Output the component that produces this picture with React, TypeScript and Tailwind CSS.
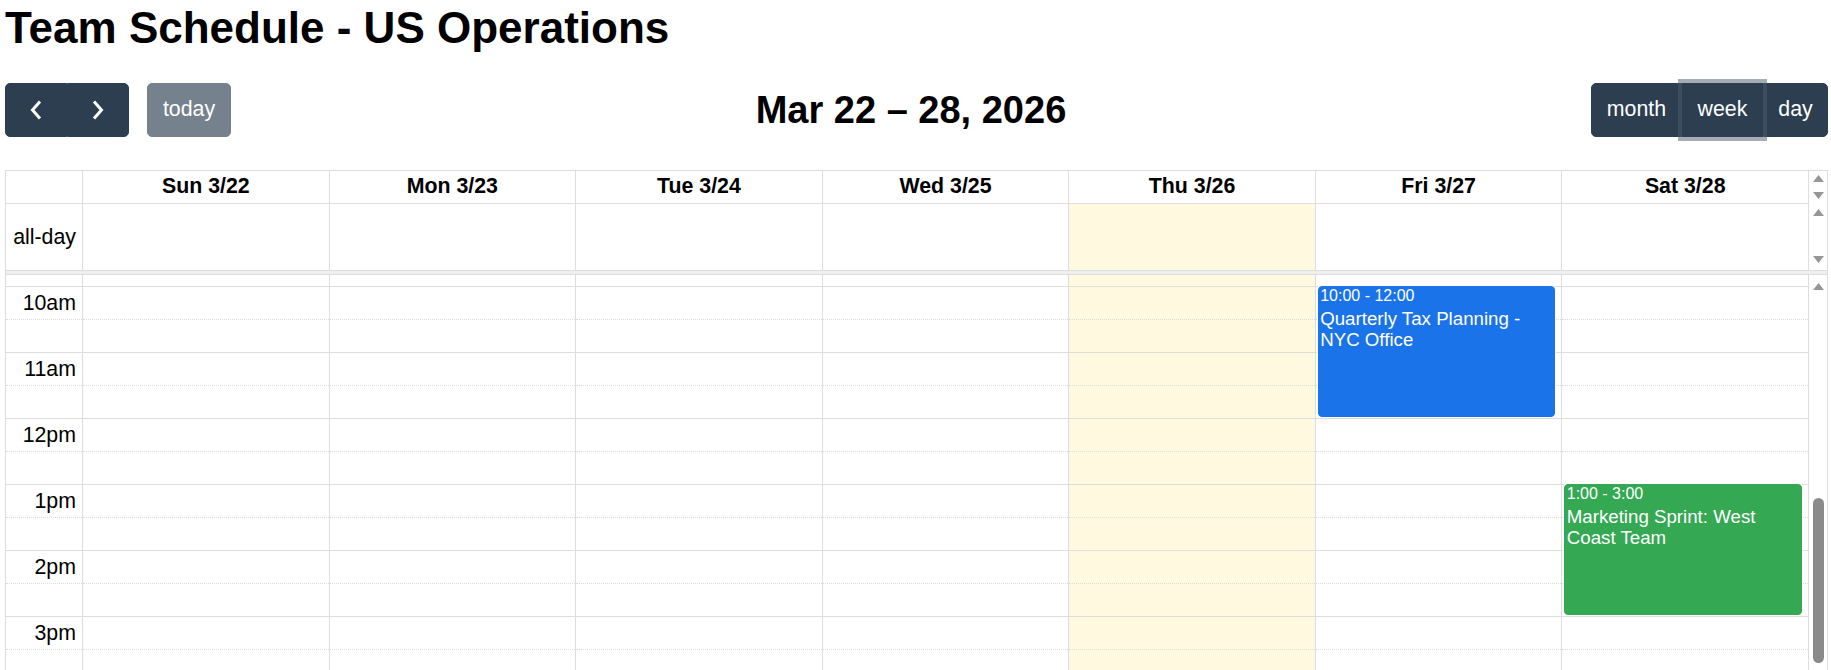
import React from 'react';

type Day = { label: string; today?: boolean };

type CalEvent = {
  day: number;
  start: number; // hour, 24h
  end: number;
  time: string;
  title: string;
  tone: 'blue' | 'green';
};

const days: Day[] = [
  { label: 'Sun 3/22' },
  { label: 'Mon 3/23' },
  { label: 'Tue 3/24' },
  { label: 'Wed 3/25' },
  { label: 'Thu 3/26', today: true },
  { label: 'Fri 3/27' },
  { label: 'Sat 3/28' },
];

// half-hour slots starting at 10am; null = minor (dotted) slot
const slots: (string | null)[] = ['10am', null, '11am', null, '12pm', null, '1pm', null, '2pm', null, '3pm', null];

const events: CalEvent[] = [
  { day: 5, start: 10, end: 12, time: '10:00 - 12:00', title: 'Quarterly Tax Planning - NYC Office', tone: 'blue' },
  { day: 6, start: 13, end: 15, time: '1:00 - 3:00', title: 'Marketing Sprint: West Coast Team', tone: 'green' },
];

const toneMap: Record<CalEvent['tone'], string> = {
  blue: 'bg-[#1a73e8] border-[#1a73e8]',
  green: 'bg-[#34a853] border-[#34a853]',
};

const SLOT = 33;
const OFFSET = 11; // part of the 9:30 slot still visible above 10am
const todayBg = 'bg-[rgba(255,220,40,0.15)]';

const Arrow = ({ down }: { down?: boolean }) => (
  <svg width="11" height="7" viewBox="0 0 11 7" className="block">
    <path d={down ? 'M0 0H11L5.5 7Z' : 'M5.5 0L11 7H0Z'} fill="#969696" />
  </svg>
);

const Chevron = ({ dir }: { dir: 'left' | 'right' }) => (
  <svg width="16" height="22" viewBox="0 0 16 22" className="block">
    <polyline
      points={dir === 'left' ? '12,2.5 4.5,11 12,19.5' : '4,2.5 11.5,11 4,19.5'}
      fill="none"
      stroke="#fff"
      strokeWidth="3"
    />
  </svg>
);

const btn = 'h-[54px] flex items-center justify-center text-[21.33px] text-white bg-[#2c3e50] border border-[#2c3e50]';

export default function App() {
  return (
    <div className="h-[670px] overflow-hidden bg-white pt-[4px] pl-[5px] pr-[3px] font-['Liberation_Sans',Arial,sans-serif] text-black">
      <h1 className="text-[44px] font-bold leading-[48px]">Team Schedule - US Operations</h1>

      {/* Toolbar */}
      <div className="mt-[31px] mb-[33px] flex h-[54px] items-center justify-between">
        <div className="flex items-center">
          <div className="flex">
            <button className={`${btn} w-[62px] rounded-l-[5px]`} aria-label="prev">
              <Chevron dir="left" />
            </button>
            <button className={`${btn} w-[62px] rounded-r-[5px]`} aria-label="next">
              <Chevron dir="right" />
            </button>
          </div>
          <button className={`${btn} ml-[18px] w-[84px] rounded-[5px] opacity-65`}>today</button>
        </div>
        <h2 className="text-[38px] font-bold leading-normal">Mar 22 – 28, 2026</h2>
        <div className="flex">
          <button className={`${btn} w-[91px] rounded-l-[5px]`}>month</button>
          <button className={`${btn} relative z-10 w-[81px] bg-[#1e2b37] border-[#1a252f] shadow-[0_0_0_4px_rgba(76,91,106,0.5)]`}>
            week
          </button>
          <button className={`${btn} w-[65px] rounded-r-[5px]`}>day</button>
        </div>
      </div>

      {/* Calendar */}
      <div className="border-x border-t border-[#ddd] text-[21.33px]">
        {/* Column headers */}
        <div className="grid grid-cols-[76px_repeat(7,minmax(0,1fr))_19px]">
          <div className="h-[33px] border-b border-[#ddd]" />
          {days.map((d) => (
            <div key={d.label} className="flex h-[33px] items-center justify-center border-b border-l border-[#ddd] font-bold">
              {d.label}
            </div>
          ))}
          <div className="flex h-[33px] flex-col items-center border-l border-[#ddd] pt-[4px] pl-[2px]">
            <Arrow />
            <div className="mt-[10px]">
              <Arrow down />
            </div>
          </div>
        </div>

        {/* All-day row */}
        <div className="grid grid-cols-[76px_repeat(7,minmax(0,1fr))_19px]">
          <div className="flex h-[66px] items-center justify-end pt-[2px] pr-[6px]">all-day</div>
          {days.map((d) => (
            <div key={d.label} className={`h-[66px] border-l border-[#ddd] ${d.today ? todayBg : ''}`} />
          ))}
          <div className="flex h-[66px] flex-col items-center border-l border-[#ddd] pt-[5px] pl-[2px]">
            <Arrow />
            <div className="mt-[40px]">
              <Arrow down />
            </div>
          </div>
        </div>

        {/* Divider */}
        <div className="h-[5px] border-y border-[#ddd] bg-[#efefef]" />

        {/* Time grid */}
        <div className="grid grid-cols-[76px_repeat(7,minmax(0,1fr))_19px]">
          <div className="flex flex-col">
            <div className="h-[11px]" />
            {slots.map((s, i) => (
              <div
                key={i}
                className={`flex h-[33px] items-center justify-end border-t border-[#ddd] pt-[2px] pr-[6px] ${s ? '' : 'border-dotted'}`}
              >
                {s}
              </div>
            ))}
          </div>

          {days.map((d, di) => (
            <div key={d.label} className={`relative flex flex-col border-l border-[#ddd] ${d.today ? todayBg : ''}`}>
              <div className="h-[11px]" />
              {slots.map((s, i) => (
                <div key={i} className={`h-[33px] border-t border-[#ddd] ${s ? '' : 'border-dotted'}`} />
              ))}
              {events
                .filter((e) => e.day === di)
                .map((e) => (
                  <div
                    key={e.title}
                    className={`absolute left-[2px] right-[6px] overflow-hidden rounded-[4px] border px-[1.33px] text-white shadow-[0_0_0_1px_#fff] ${toneMap[e.tone]}`}
                    style={{ top: OFFSET + (e.start - 10) * SLOT * 2, height: (e.end - e.start) * SLOT * 2 - 1 }}
                  >
                    <div className="mb-[3px] whitespace-nowrap text-[16px] leading-[18px]">{e.time}</div>
                    <div className="text-[18.7px] leading-[21px]">{e.title}</div>
                  </div>
                ))}
            </div>
          ))}

          {/* Scrollbar gutter */}
          <div className="flex flex-col items-center border-l border-[#ddd] pt-[8px] pl-[2px]">
            <Arrow />
            <div className="mt-[208px] h-[165px] w-[11px] rounded-full bg-[#8a8a8a]" />
          </div>
        </div>
      </div>
    </div>
  );
}
